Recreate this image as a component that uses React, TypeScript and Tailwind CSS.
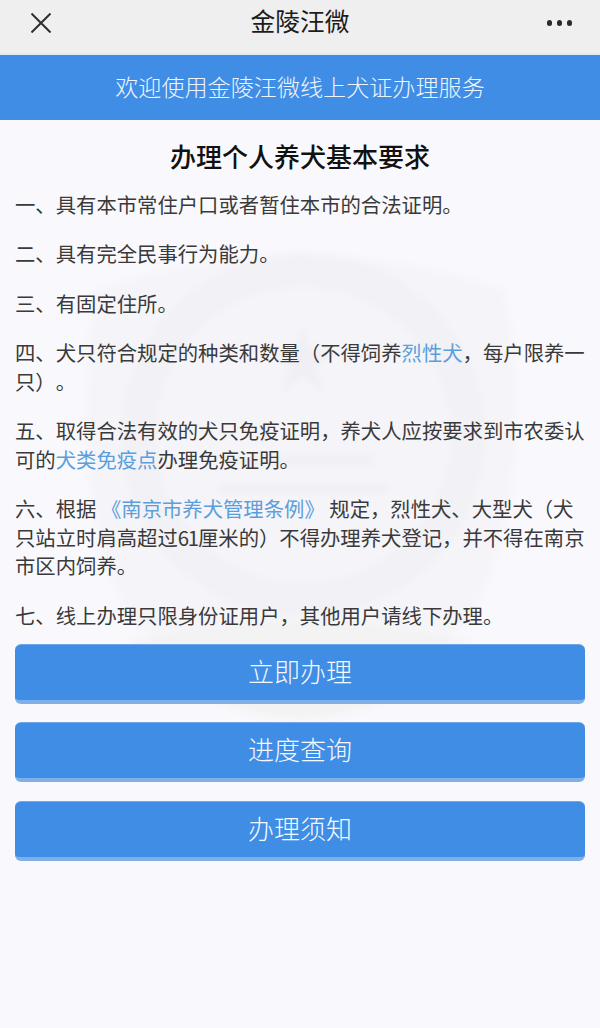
import React from 'react'

const font = { fontFamily: '"Noto Sans CJK SC", "Liberation Sans", sans-serif' }

function Link({ children }: { children: React.ReactNode }) {
  return <span className="text-[#5a9fdc]">{children}</span>
}

function ActionButton({ label }: { label: string }) {
  return (
    <button className="h-[60px] w-full rounded-md border-t border-b-4 border-t-[#6ea8ea] border-b-[#7db0e8] bg-[#3f8de5] pb-[3px] text-[26px] leading-none font-light text-[#f4f9ff]">
      {label}
    </button>
  )
}

// faint emblem behind the text
function Watermark() {
  return (
    <svg className="absolute left-[60px] top-[230px] blur-[3px]" width="480" height="520" viewBox="0 0 480 520" fill="none">
      <path d="M35 60 Q240 -10 445 60 Q480 260 410 390 Q240 520 70 390 Q5 260 35 60Z" fill="#f5f4f8" />
      <circle cx="243" cy="205" r="182" fill="#f2f1f5" />
      <circle cx="243" cy="205" r="148" fill="#f5f4f8" />
      <path d="M243 95 l8 26 h26 l-21 16 l8 26 l-21 -16 l-21 16 l8 -26 l-21 -16 h26z" fill="#f0eff4" />
      <path d="M173 225 h140 v10 h-140z M158 255 h170 v8 h-170z" fill="#f0eff4" />
      <path d="M70 410 Q240 370 410 410 Q330 490 240 490 Q150 490 70 410Z" fill="#f4f3f4" />
    </svg>
  )
}

export default function App() {
  return (
    <div className="relative flex h-[1028px] w-[600px] flex-col overflow-hidden bg-[#f9f9fd]" style={font}>
      <Watermark />

      <div className="relative flex h-[55px] shrink-0 items-center justify-between border-b-2 border-b-[#dcecfa] bg-[#efeff0] pb-[7px] pl-[31px] pr-[28px]">
        <svg width="20" height="20" viewBox="0 0 20 20" fill="none" stroke="#2f2f2f" strokeWidth="2">
          <path d="M0.5 0.5 L19.5 19.5 M19.5 0.5 L0.5 19.5" />
        </svg>
        <span className="absolute inset-x-0 pb-[5px] text-center text-[24.7px] leading-none font-normal text-[#1c1c1c]">金陵汪微</span>
        <div className="flex gap-[4.5px]">
          <span className="h-[5.5px] w-[5.5px] rounded-full bg-[#2b2b2b]" />
          <span className="h-[5.5px] w-[5.5px] rounded-full bg-[#2b2b2b]" />
          <span className="h-[5.5px] w-[5.5px] rounded-full bg-[#2b2b2b]" />
        </div>
      </div>

      <div className="relative flex h-[65px] shrink-0 items-center justify-center bg-[#3f8de5] pb-[2px] text-[23.1px] font-light text-[#eef5fd]">
        欢迎使用金陵汪微线上犬证办理服务
      </div>

      <div className="relative flex flex-col px-[15px]">
        <h1 className="mt-[19px] mb-[16.5px] text-center text-[26px] leading-[34px] font-medium text-[#111111]">办理个人养犬基本要求</h1>

        <div className="flex flex-col gap-[21px] text-[20.35px] leading-[28.5px] font-normal text-[#3a3a3a] [text-spacing-trim:space-all]">
          <p>一、具有本市常住户口或者暂住本市的合法证明。</p>
          <p>二、具有完全民事行为能力。</p>
          <p>三、有固定住所。</p>
          <p>四、犬只符合规定的种类和数量（不得饲养<Link>烈性犬</Link>，每户限养一只）。</p>
          <p>五、取得合法有效的犬只免疫证明，养犬人应按要求到市农委认可的<Link>犬类免疫点</Link>办理免疫证明。</p>
          <p>六、根据 <Link>《南京市养犬管理条例》</Link> 规定，烈性犬、大型犬（犬只站立时肩高超过<span className="tracking-[-1.2px]">61</span>厘米的）不得办理养犬登记，并不得在南京市区内饲养。</p>
          <p>七、线上办理只限身份证用户，其他用户请线下办理。</p>
        </div>

        <div className="mt-[14.5px] flex flex-col gap-[18.5px]">
          <ActionButton label="立即办理" />
          <ActionButton label="进度查询" />
          <ActionButton label="办理须知" />
        </div>
      </div>
    </div>
  )
}
